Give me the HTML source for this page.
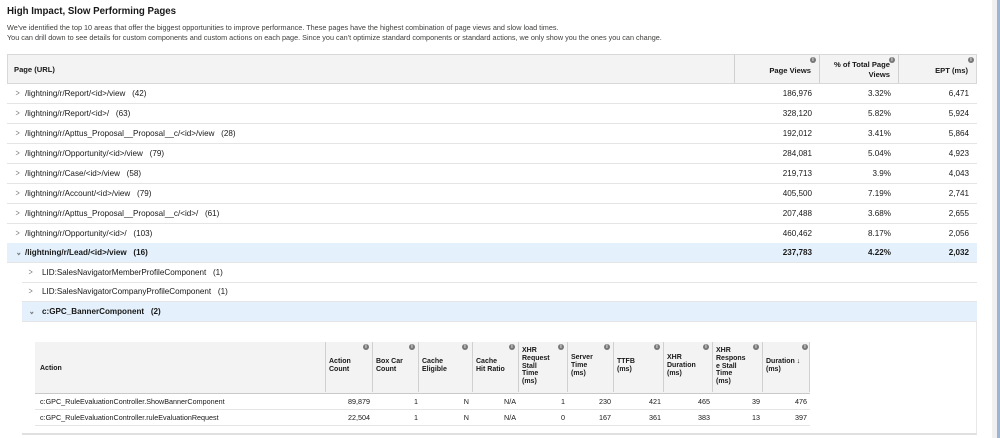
<!DOCTYPE html>
<html><head><meta charset="utf-8"><style>
*{margin:0;padding:0;box-sizing:border-box}
body{width:1000px;height:438px;background:#fff;font-family:"Liberation Sans",Arial,sans-serif;color:#181818;position:relative;overflow:hidden;font-size:8.1px}
.a{position:absolute;white-space:nowrap}
.t{left:7px;top:6px;font-size:9.7px;font-weight:bold}
.d{left:7px;font-size:7.25px;color:#3e3e3c}
.hdr{position:absolute;left:7px;top:54px;width:970px;height:30px;background:#f3f3f3;border:1px solid #d8d8d8}
.hdr span{font-size:7.6px}
.row{position:absolute;left:7px;width:970px;height:20px;border-bottom:1px solid #e5e5e5}
.row span{position:absolute;top:5px}
.chev{left:8px;color:#777;font-size:9px;top:4px!important;transform:scaleX(.8)}
.sel{background:#e4f0fb;font-weight:bold}
.i{position:absolute;width:6px;height:6px;border-radius:50%;background:#777;color:#fff;font-size:5px!important;line-height:6px;text-align:center;font-weight:bold}
.vl{position:absolute;top:0;width:1px;background:#d0d0d0}
.ih{position:absolute;top:342px;height:52px;background:#f3f3f3;border-bottom:1px solid #c9c9c9}
.ih b{position:absolute;font-size:7px;line-height:7.8px}
.ir span{font-size:7.2px}
</style></head><body>
<div class="a t">High Impact, Slow Performing Pages</div>
<div class="a d" style="top:23px">We've identified the top 10 areas that offer the biggest opportunities to improve performance. These pages have the highest combination of page views and slow load times.</div>
<div class="a d" style="top:33px">You can drill down to see details for custom components and custom actions on each page. Since you can't optimize standard components or standard actions, we only show you the ones you can change.</div>

<div style="position:absolute;left:992px;top:0;width:5px;height:438px;background:#f0f0f0"></div>
<div style="position:absolute;left:997px;top:0;width:3px;height:438px;background:#9fb4d0"></div>

<div class="hdr">
 <span class="a" style="left:6px;top:10px;font-weight:bold">Page (URL)</span>
 <div class="vl" style="left:726px;height:28px"></div>
 <div class="vl" style="left:811px;height:28px"></div>
 <div class="vl" style="left:890px;height:28px"></div>
 <span class="a" style="right:165px;top:11px;font-weight:bold">Page Views</span><span class="i" style="left:802px;top:2px">i</span>
 <span class="a" style="right:86px;top:5px;font-weight:bold;text-align:right;line-height:10px">% of Total Page<br>Views</span><span class="i" style="left:881px;top:2px">i</span>
 <span class="a" style="right:8px;top:11px;font-weight:bold">EPT (ms)</span><span class="i" style="left:960px;top:2px">i</span>
</div>

<div class="row" style="top:84px"><span class="chev">&gt;</span><span style="left:18px">/lightning/r/Report/&lt;id&gt;/view &nbsp; (42)</span><span style="right:165px">186,976</span><span style="right:86px">3.32%</span><span style="right:8px">6,471</span></div>
<div class="row" style="top:104px"><span class="chev">&gt;</span><span style="left:18px">/lightning/r/Report/&lt;id&gt;/ &nbsp; (63)</span><span style="right:165px">328,120</span><span style="right:86px">5.82%</span><span style="right:8px">5,924</span></div>
<div class="row" style="top:124px"><span class="chev">&gt;</span><span style="left:18px">/lightning/r/Apttus_Proposal__Proposal__c/&lt;id&gt;/view &nbsp; (28)</span><span style="right:165px">192,012</span><span style="right:86px">3.41%</span><span style="right:8px">5,864</span></div>
<div class="row" style="top:144px"><span class="chev">&gt;</span><span style="left:18px">/lightning/r/Opportunity/&lt;id&gt;/view &nbsp; (79)</span><span style="right:165px">284,081</span><span style="right:86px">5.04%</span><span style="right:8px">4,923</span></div>
<div class="row" style="top:164px"><span class="chev">&gt;</span><span style="left:18px">/lightning/r/Case/&lt;id&gt;/view &nbsp; (58)</span><span style="right:165px">219,713</span><span style="right:86px">3.9%</span><span style="right:8px">4,043</span></div>
<div class="row" style="top:184px"><span class="chev">&gt;</span><span style="left:18px">/lightning/r/Account/&lt;id&gt;/view &nbsp; (79)</span><span style="right:165px">405,500</span><span style="right:86px">7.19%</span><span style="right:8px">2,741</span></div>
<div class="row" style="top:204px"><span class="chev">&gt;</span><span style="left:18px">/lightning/r/Apttus_Proposal__Proposal__c/&lt;id&gt;/ &nbsp; (61)</span><span style="right:165px">207,488</span><span style="right:86px">3.68%</span><span style="right:8px">2,655</span></div>
<div class="row" style="top:224px"><span class="chev">&gt;</span><span style="left:18px">/lightning/r/Opportunity/&lt;id&gt;/ &nbsp; (103)</span><span style="right:165px">460,462</span><span style="right:86px">8.17%</span><span style="right:8px">2,056</span></div>
<div class="row sel" style="top:243px"><span class="chev">&#8964;</span><span style="left:18px">/lightning/r/Lead/&lt;id&gt;/view &nbsp; (16)</span><span style="right:165px">237,783</span><span style="right:86px">4.22%</span><span style="right:8px">2,032</span></div>
<div class="row" style="top:263px;left:22px;width:955px"><span class="chev" style="left:6px">&gt;</span><span style="left:20px">LID:SalesNavigatorMemberProfileComponent &nbsp; (1)</span></div>
<div class="row" style="top:282px;left:22px;width:955px"><span class="chev" style="left:6px">&gt;</span><span style="left:20px">LID:SalesNavigatorCompanyProfileComponent &nbsp; (1)</span></div>
<div class="row sel" style="top:302px;left:22px;width:955px"><span class="chev" style="left:6px">&#8964;</span><span style="left:20px">c:GPC_BannerComponent &nbsp; (2)</span></div>
<div style="position:absolute;left:22px;top:322px;width:955px;height:113px;border-bottom:2px solid #e0e0e0;border-right:1px solid #e8e8e8"></div>

<div class="ih" style="left:35px;width:290px"><b style="left:5px;top:23px">Action</b></div>
<div class="ih" style="left:325px;width:485px">
 <div class="vl" style="left:0;height:50px"></div>
 <b style="left:4px;top:16px">Action<br>Count</b><span class="i" style="left:38px;top:2px">i</span>
 <div class="vl" style="left:47px;height:50px"></div>
 <b style="left:51px;top:16px">Box Car<br>Count</b><span class="i" style="left:84px;top:2px">i</span>
 <div class="vl" style="left:93px;height:50px"></div>
 <b style="left:97px;top:16px">Cache<br>Eligible</b><span class="i" style="left:137px;top:2px">i</span>
 <div class="vl" style="left:147px;height:50px"></div>
 <b style="left:151px;top:16px">Cache<br>Hit Ratio</b><span class="i" style="left:184px;top:2px">i</span>
 <div class="vl" style="left:193px;height:50px"></div>
 <b style="left:197px;top:5px">XHR<br>Request<br>Stall<br>Time<br>(ms)</b><span class="i" style="left:233px;top:2px">i</span>
 <div class="vl" style="left:242px;height:50px"></div>
 <b style="left:246px;top:12px">Server<br>Time<br>(ms)</b><span class="i" style="left:279px;top:2px">i</span>
 <div class="vl" style="left:288px;height:50px"></div>
 <b style="left:292px;top:16px">TTFB<br>(ms)</b><span class="i" style="left:329px;top:2px">i</span>
 <div class="vl" style="left:338px;height:50px"></div>
 <b style="left:342px;top:12px">XHR<br>Duration<br>(ms)</b><span class="i" style="left:378px;top:2px">i</span>
 <div class="vl" style="left:387px;height:50px"></div>
 <b style="left:391px;top:5px">XHR<br>Respons<br>e Stall<br>Time<br>(ms)</b><span class="i" style="left:428px;top:2px">i</span>
 <div class="vl" style="left:437px;height:50px"></div>
 <b style="left:441px;top:16px">Duration ↓<br>(ms)</b><span class="i" style="left:477px;top:2px">i</span>
 <div class="vl" style="left:484px;height:50px"></div>
</div>
<div class="row ir" style="top:394px;left:35px;width:775px;height:16px"><span style="left:5px;top:3px">c:GPC_RuleEvaluationController.ShowBannerComponent</span>
<span style="right:440px;top:3px">89,879</span><span style="right:392px;top:3px">1</span><span style="right:341px;top:3px">N</span><span style="right:294px;top:3px">N/A</span><span style="right:245px;top:3px">1</span><span style="right:199px;top:3px">230</span><span style="right:149px;top:3px">421</span><span style="right:100px;top:3px">465</span><span style="right:50px;top:3px">39</span><span style="right:3px;top:3px">476</span></div>
<div class="row ir" style="top:410px;left:35px;width:775px;height:16px"><span style="left:5px;top:3px">c:GPC_RuleEvaluationController.ruleEvaluationRequest</span>
<span style="right:440px;top:3px">22,504</span><span style="right:392px;top:3px">1</span><span style="right:341px;top:3px">N</span><span style="right:294px;top:3px">N/A</span><span style="right:245px;top:3px">0</span><span style="right:199px;top:3px">167</span><span style="right:149px;top:3px">361</span><span style="right:100px;top:3px">383</span><span style="right:50px;top:3px">13</span><span style="right:3px;top:3px">397</span></div>
</body></html>
